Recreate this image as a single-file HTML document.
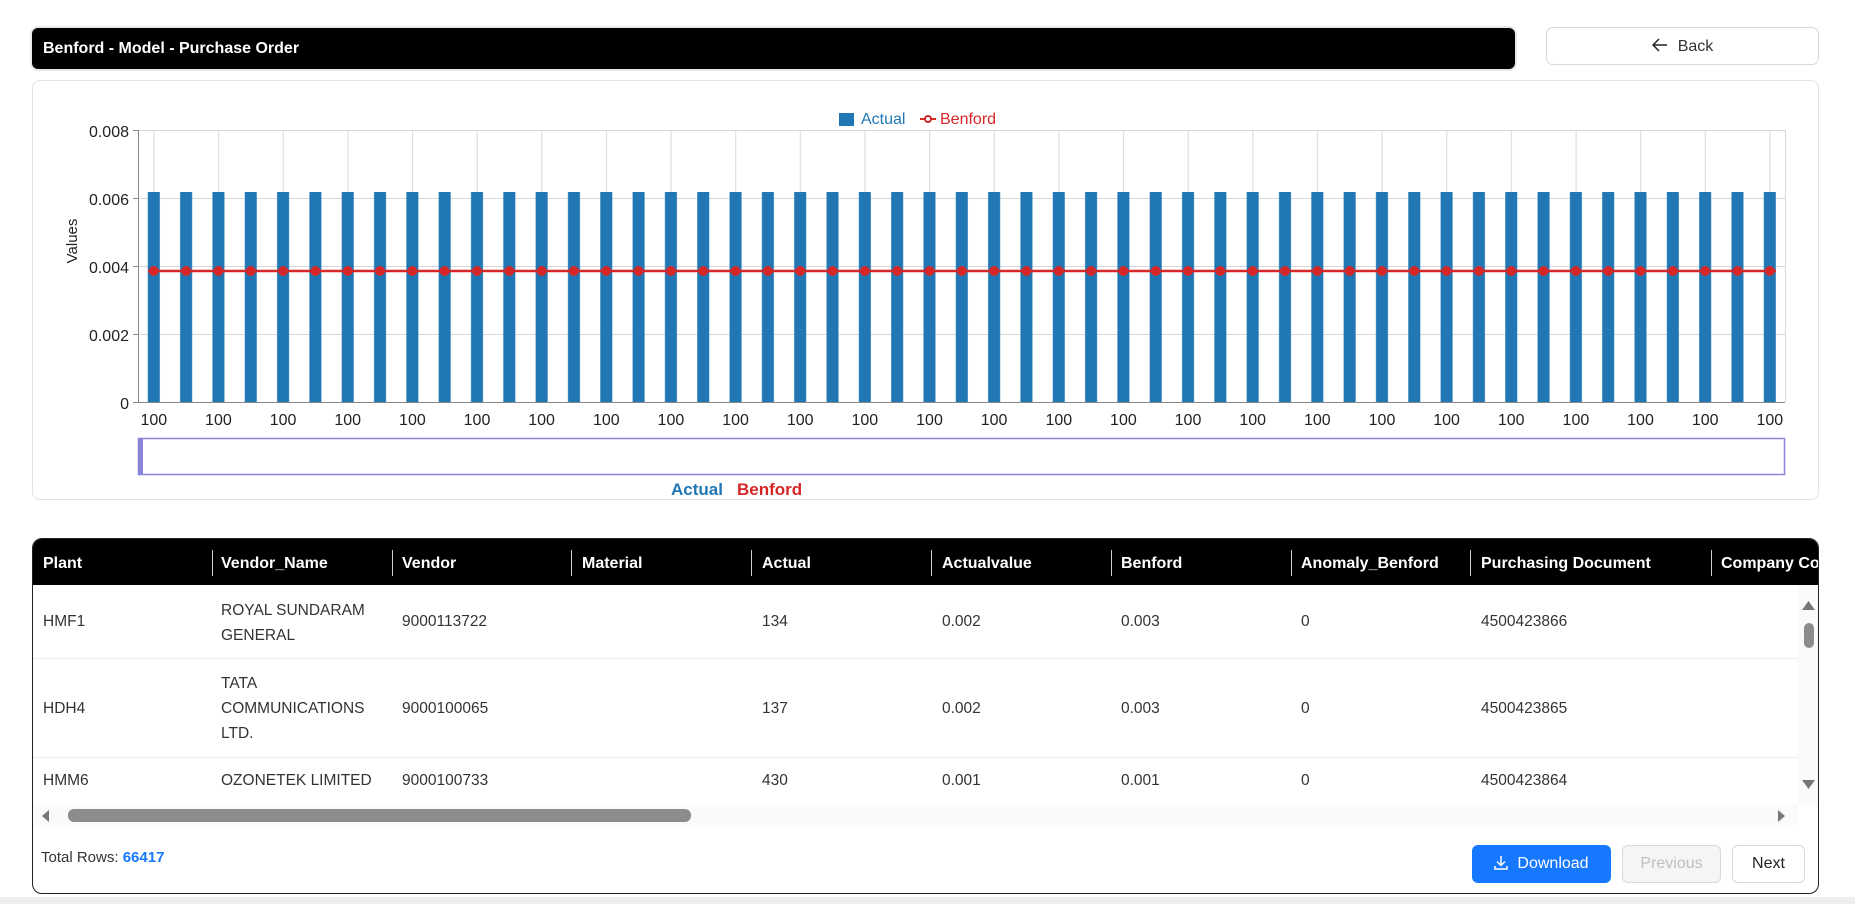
<!DOCTYPE html>
<html><head><meta charset="utf-8"><style>
*{box-sizing:border-box;margin:0;padding:0}
body{width:1855px;height:904px;background:#fff;font-family:"Liberation Sans",sans-serif;position:relative;overflow:hidden;color:#222}
.title{position:absolute;left:32px;top:28px;width:1483px;height:41px;background:#000;border-radius:6px;color:#fff;font-weight:bold;font-size:16px;line-height:41px;padding-left:11px;box-shadow:0 0 0 2px #e8e8e8}
.back{position:absolute;left:1546px;top:27px;width:273px;height:38px;border:1px solid #d9d9d9;border-radius:7px;font-size:16px;line-height:38px;text-align:center;color:#333}
.card{position:absolute;left:32px;top:80px;width:1787px;height:420px;border:1px solid #e3e3e3;border-radius:8px}
svg text{font-family:"Liberation Sans",sans-serif}
.tbl{position:absolute;left:32px;top:538px;width:1787px;height:356px;border:1px solid #222;border-radius:10px;overflow:hidden}
.hd{position:absolute;left:0;top:0;width:100%;height:46px;background:#000;color:#fff;font-weight:bold;font-size:16px}
.hd span{position:absolute;top:16px;white-space:nowrap}
.hd i{position:absolute;top:11px;width:1px;height:26px;background:#ccc}
.row{position:absolute;left:0;width:1765px;border-bottom:1px solid #ececec;font-size:15.5px;color:#333}
.row span{position:absolute;line-height:25px}
.bottom{position:absolute;left:0;top:897px;width:1855px;height:7px;background:#eee}
.btn{position:absolute;top:845px;height:38px;border-radius:6px;font-size:16px;line-height:36px;text-align:center}
</style></head><body>
<div class="title">Benford - Model - Purchase Order</div>
<div class="back"><svg width="16" height="14" viewBox="0 0 16 14" style="vertical-align:-1px;margin-right:10px"><path d="M15 7H2M7 1L1 7l6 6" stroke="#222" stroke-width="1.5" fill="none"/></svg>Back</div>
<div class="card"></div>
<svg style="position:absolute;left:0;top:0" width="1855" height="520">
<defs>
<pattern id="bars" patternUnits="userSpaceOnUse" x="137.64" y="0" width="32.32" height="520"><rect x="10.16" y="0" width="12" height="520" fill="#2077b4"/></pattern>
<pattern id="dots" patternUnits="userSpaceOnUse" x="137.64" y="266" width="32.32" height="10"><circle cx="16.16" cy="5" r="5" fill="#d62728"/></pattern>
<pattern id="vg" patternUnits="userSpaceOnUse" x="121.48" y="0" width="64.64" height="520"><rect x="32" y="0" width="1" height="520" fill="#d8d8d8"/></pattern>
</defs>
<rect x="139" y="130" width="1646" height="272" fill="url(#vg)"/>
<g stroke="#d8d8d8" stroke-width="1"><line x1="138" y1="130.5" x2="1785" y2="130.5"/><line x1="138" y1="198.5" x2="1785" y2="198.5"/><line x1="138" y1="266.5" x2="1785" y2="266.5"/><line x1="138" y1="334.5" x2="1785" y2="334.5"/><line x1="1785.5" y1="130" x2="1785.5" y2="402"/></g>
<rect x="147" y="192" width="1630" height="210" fill="url(#bars)"/>
<line x1="148" y1="271" x2="1776" y2="271" stroke="#d62728" stroke-width="2.5"/>
<rect x="147" y="266" width="1630" height="10" fill="url(#dots)"/>
<g stroke="#888"><line x1="138.5" y1="130" x2="138.5" y2="403"/><line x1="138" y1="402.5" x2="1785" y2="402.5"/>
<line x1="133" y1="130.5" x2="138" y2="130.5"/><line x1="133" y1="198.5" x2="138" y2="198.5"/><line x1="133" y1="266.5" x2="138" y2="266.5"/><line x1="133" y1="334.5" x2="138" y2="334.5"/><line x1="133" y1="402.5" x2="138" y2="402.5"/></g>
<g font-size="16" fill="#222" text-anchor="end"><text x="129" y="137">0.008</text><text x="129" y="205">0.006</text><text x="129" y="273">0.004</text><text x="129" y="341">0.002</text><text x="129" y="409">0</text></g>
<text transform="translate(77,241) rotate(-90)" font-size="15" text-anchor="middle" fill="#222">Values</text>
<g font-size="16" fill="#222" text-anchor="middle">
<text x="153.8" y="425">100</text><text x="218.4" y="425">100</text><text x="283.1" y="425">100</text><text x="347.7" y="425">100</text><text x="412.4" y="425">100</text><text x="477" y="425">100</text><text x="541.6" y="425">100</text><text x="606.3" y="425">100</text><text x="670.9" y="425">100</text><text x="735.6" y="425">100</text><text x="800.2" y="425">100</text><text x="864.8" y="425">100</text><text x="929.5" y="425">100</text><text x="994.1" y="425">100</text><text x="1058.8" y="425">100</text><text x="1123.4" y="425">100</text><text x="1188" y="425">100</text><text x="1252.7" y="425">100</text><text x="1317.3" y="425">100</text><text x="1382" y="425">100</text><text x="1446.6" y="425">100</text><text x="1511.2" y="425">100</text><text x="1575.9" y="425">100</text><text x="1640.5" y="425">100</text><text x="1705.2" y="425">100</text><text x="1769.8" y="425">100</text></g>
<rect x="839" y="113" width="15" height="13" fill="#2077b4"/>
<text x="861" y="124" font-size="16" fill="#2077b4">Actual</text>
<line x1="920" y1="119" x2="936" y2="119" stroke="#d62728" stroke-width="2"/><circle cx="928" cy="119" r="3" fill="#fff" stroke="#d62728" stroke-width="2"/>
<text x="940" y="124" font-size="16" fill="#d62728">Benford</text>
<rect x="138.5" y="438.5" width="1646" height="36" fill="none" stroke="#8a84dd" stroke-width="1.5"/>
<rect x="138" y="438" width="5" height="37" fill="#8a84dd"/>
<text x="671" y="495" font-size="17" font-weight="bold" fill="#2077b4">Actual</text>
<text x="737" y="495" font-size="17" font-weight="bold" fill="#d62728">Benford</text>
</svg>
<div class="tbl">
<div class="hd">
<span style="left:10px">Plant</span><i style="left:179px"></i><span style="left:188px">Vendor_Name</span><i style="left:359px"></i><span style="left:369px">Vendor</span><i style="left:538px"></i><span style="left:549px">Material</span><i style="left:718px"></i><span style="left:729px">Actual</span><i style="left:898px"></i><span style="left:909px">Actualvalue</span><i style="left:1078px"></i><span style="left:1088px">Benford</span><i style="left:1258px"></i><span style="left:1268px">Anomaly_Benford</span><i style="left:1437px"></i><span style="left:1448px">Purchasing Document</span><i style="left:1678px"></i><span style="left:1688px">Company Co</span>
</div>
<div class="row" style="top:46px;height:74px">
<span style="left:10px;top:24px">HMF1</span><span style="left:188px;top:13px">ROYAL SUNDARAM<br>GENERAL</span><span style="left:369px;top:24px">9000113722</span><span style="left:729px;top:24px">134</span><span style="left:909px;top:24px">0.002</span><span style="left:1088px;top:24px">0.003</span><span style="left:1268px;top:24px">0</span><span style="left:1448px;top:24px">4500423866</span>
</div>
<div class="row" style="top:120px;height:99px">
<span style="left:10px;top:37px">HDH4</span><span style="left:188px;top:12px">TATA<br>COMMUNICATIONS<br>LTD.</span><span style="left:369px;top:37px">9000100065</span><span style="left:729px;top:37px">137</span><span style="left:909px;top:37px">0.002</span><span style="left:1088px;top:37px">0.003</span><span style="left:1268px;top:37px">0</span><span style="left:1448px;top:37px">4500423865</span>
</div>
<div class="row" style="top:219px;height:48px;border:none">
<span style="left:10px;top:10px">HMM6</span><span style="left:188px;top:10px">OZONETEK LIMITED</span><span style="left:369px;top:10px">9000100733</span><span style="left:729px;top:10px">430</span><span style="left:909px;top:10px">0.001</span><span style="left:1088px;top:10px">0.001</span><span style="left:1268px;top:10px">0</span><span style="left:1448px;top:10px">4500423864</span>
</div>
<div style="position:absolute;left:1765px;top:46px;width:21px;height:220px;background:#fafafa"></div>
<svg style="position:absolute;left:1765px;top:58px" width="21" height="200"><path d="M4 13L10.5 4L17 13Z" fill="#777"/><rect x="6" y="26" width="10" height="25" rx="5" fill="#8c8c8c"/><path d="M4 183L10.5 192L17 183Z" fill="#777"/></svg>
<div style="position:absolute;left:0;top:266px;width:1765px;height:20px;background:#fafafa"></div>
<div style="position:absolute;left:35px;top:270px;width:623px;height:13px;border-radius:6px;background:#8c8c8c"></div>
<svg style="position:absolute;left:6px;top:269px" width="1764" height="16"><path d="M10 2L3 8L10 14Z" fill="#777"/><path d="M1739 2L1746 8L1739 14Z" fill="#777"/></svg>
</div>
<div style="position:absolute;left:41px;top:849px;font-size:15px;color:#333">Total Rows: <b style="color:#1677ff">66417</b></div>
<div class="btn" style="left:1472px;width:139px;background:#1677ff;color:#fff;line-height:38px"><svg width="14" height="15" viewBox="0 0 14 15" style="vertical-align:-2px;margin-right:9px"><path d="M7 1v9M3 6.5l4 4 4-4M1 11v3h12v-3" stroke="#fff" stroke-width="1.5" fill="none"/></svg>Download</div>
<div class="btn" style="left:1622px;width:99px;background:#f5f5f5;border:1px solid #d9d9d9;color:#bfbfbf">Previous</div>
<div class="btn" style="left:1732px;width:73px;background:#fff;border:1px solid #d9d9d9;color:#222">Next</div>
<div class="bottom"></div>
</body></html>
